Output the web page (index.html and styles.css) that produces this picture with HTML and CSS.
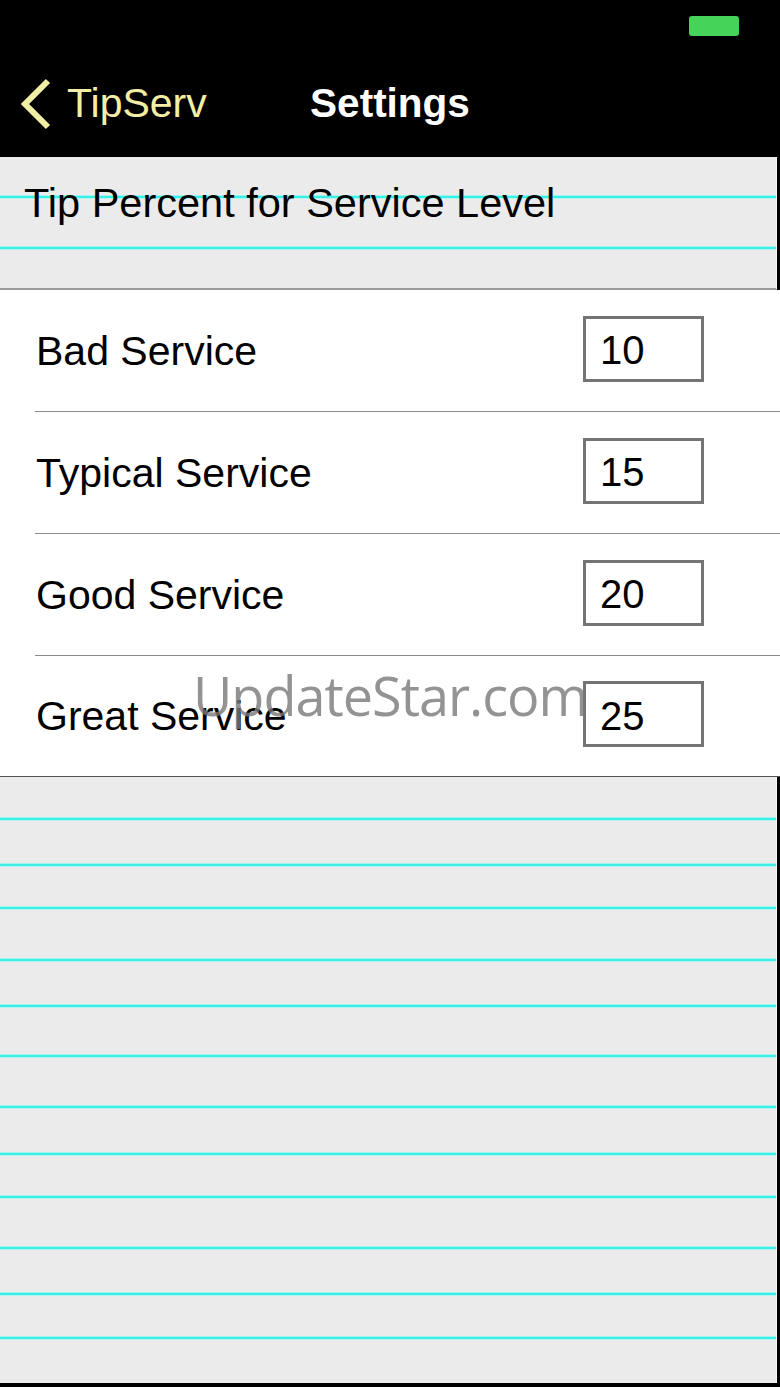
FILE: index.html
```html
<!DOCTYPE html>
<html lang="en">
<head>
<meta charset="utf-8">
<title>Settings</title>
<link rel="stylesheet" href="styles.css">
</head>
<body>
<div class="screen">
  <div class="status-bar">
    <span class="battery"></span>
  </div>
  <header class="nav-bar">
    <a class="back" href="#">
      <svg class="chevron" width="34" height="52" viewBox="0 0 34 52" aria-hidden="true">
        <path d="M29 3 L6 26 L29 49" fill="none" stroke="#f3eea6" stroke-width="6" stroke-linejoin="miter"/>
      </svg>
      <span class="back-label">TipServ</span>
    </a>
    <h1 class="title">Settings</h1>
    <span class="spacer"></span>
  </header>

  <section class="section-head">
    <h2 class="section-title">Tip Percent for Service Level</h2>
  </section>

  <section class="table">
    <div class="row">
      <span class="row-label">Bad Service</span>
      <input class="percent" type="text" value="10">
    </div>
    <div class="row">
      <span class="row-label">Typical Service</span>
      <input class="percent" type="text" value="15">
    </div>
    <div class="row">
      <span class="row-label">Good Service</span>
      <input class="percent" type="text" value="20">
    </div>
    <div class="row">
      <span class="row-label">Great Service</span>
      <input class="percent" type="text" value="25">
    </div>
  </section>

  <section class="ruled-fill"></section>

  <div class="watermark">UpdateStar.com</div>
</div>
</body>
</html>
```

FILE: styles.css
```css
* {
  box-sizing: border-box;
}

html, body {
  margin: 0;
  padding: 0;
  background: #000;
}

body {
  font-family: "Liberation Sans", Arial, sans-serif;
  color: #000;
}

.screen {
  position: relative;
  width: 780px;
  height: 1387px;
  overflow: hidden;
  background: #000;
}

/* status bar */
.status-bar {
  height: 50px;
  display: flex;
  justify-content: flex-end;
  align-items: flex-start;
  padding: 16px 41px 0 0;
}

.battery {
  display: block;
  width: 50px;
  height: 20px;
  border-radius: 3px;
  background: #45d459;
}

/* navigation bar */
.nav-bar {
  height: 107px;
  display: grid;
  grid-template-columns: 1fr auto 1fr;
  align-items: center;
}

.back {
  display: flex;
  align-items: center;
  text-decoration: none;
  padding-left: 19px;
  color: #f3eea6;
}

.chevron {
  display: block;
  margin-right: 14px;
  margin-top: 1px;
}

.back-label {
  font-size: 41px;
  line-height: 1;
}

.title {
  margin: 0;
  font-size: 40.5px;
  font-weight: bold;
  color: #fff;
  line-height: 1;
}

/* ruled line used by the grey panels */
.section-head,
.ruled-fill {
  margin-right: 3px;
  background-color: #ebebeb;
  border-right: 1px solid #f6f6f6;
  background-repeat: no-repeat;
  background-size: 100% 4px;
}

.section-head {
  height: 133px;
  border-bottom: 2px solid #9b9b9b;
  padding: 24px 0 0 24px;
  background-image:
    linear-gradient(#9ff6f0 0 1px, #3cefe6 1px 3px, #b5f5f1 3px 4px),
    linear-gradient(#9ff6f0 0 1px, #3cefe6 1px 3px, #b5f5f1 3px 4px);
  background-position: 0 38px, 0 89px;
}

.section-title {
  margin: 0;
  font-size: 41.5px;
  font-weight: normal;
  line-height: 44px;
}

/* settings table */
.table {
  background: #fff;
  padding-left: 35px;
  border-bottom: 1px solid #555;
}

.row {
  height: 122px;
  display: flex;
  align-items: center;
  justify-content: space-between;
  border-bottom: 1.5px solid #8c8c8c;
  padding: 0 76px 4px 1px;
}

.row:last-child {
  height: 120px;
  border-bottom: none;
}

.row-label {
  font-size: 41px;
  line-height: 1;
  margin-top: 5px;
}

.percent {
  width: 121px;
  height: 66px;
  border: 3px solid #747474;
  background: #fff;
  padding: 4px 0 0 14px;
  font-family: "Liberation Sans", Arial, sans-serif;
  font-size: 40px;
  color: #000;
  outline: none;
}

/* empty ruled area below the table */
.ruled-fill {
  height: 606px;
  background-image:
    linear-gradient(#9ff6f0 0 1px, #3cefe6 1px 3px, #b5f5f1 3px 4px),
    linear-gradient(#9ff6f0 0 1px, #3cefe6 1px 3px, #b5f5f1 3px 4px),
    linear-gradient(#9ff6f0 0 1px, #3cefe6 1px 3px, #b5f5f1 3px 4px),
    linear-gradient(#9ff6f0 0 1px, #3cefe6 1px 3px, #b5f5f1 3px 4px),
    linear-gradient(#9ff6f0 0 1px, #3cefe6 1px 3px, #b5f5f1 3px 4px),
    linear-gradient(#9ff6f0 0 1px, #3cefe6 1px 3px, #b5f5f1 3px 4px),
    linear-gradient(#9ff6f0 0 1px, #3cefe6 1px 3px, #b5f5f1 3px 4px),
    linear-gradient(#9ff6f0 0 1px, #3cefe6 1px 3px, #b5f5f1 3px 4px),
    linear-gradient(#9ff6f0 0 1px, #3cefe6 1px 3px, #b5f5f1 3px 4px),
    linear-gradient(#9ff6f0 0 1px, #3cefe6 1px 3px, #b5f5f1 3px 4px),
    linear-gradient(#9ff6f0 0 1px, #3cefe6 1px 3px, #b5f5f1 3px 4px),
    linear-gradient(#9ff6f0 0 1px, #3cefe6 1px 3px, #b5f5f1 3px 4px);
  background-position:
    0 40px, 0 86px, 0 129px, 0 181px, 0 227px, 0 277px,
    0 328px, 0 375px, 0 418px, 0 469px, 0 515px, 0 559px;
}

/* site mark laid over the table */
.watermark {
  position: absolute;
  left: 193px;
  top: 660px;
  font-family: "Open Sans", sans-serif;
  font-size: 54px;
  line-height: 70px;
  letter-spacing: -1px;
  color: rgba(120, 120, 120, 0.8);
  pointer-events: none;
  white-space: nowrap;
}
```
